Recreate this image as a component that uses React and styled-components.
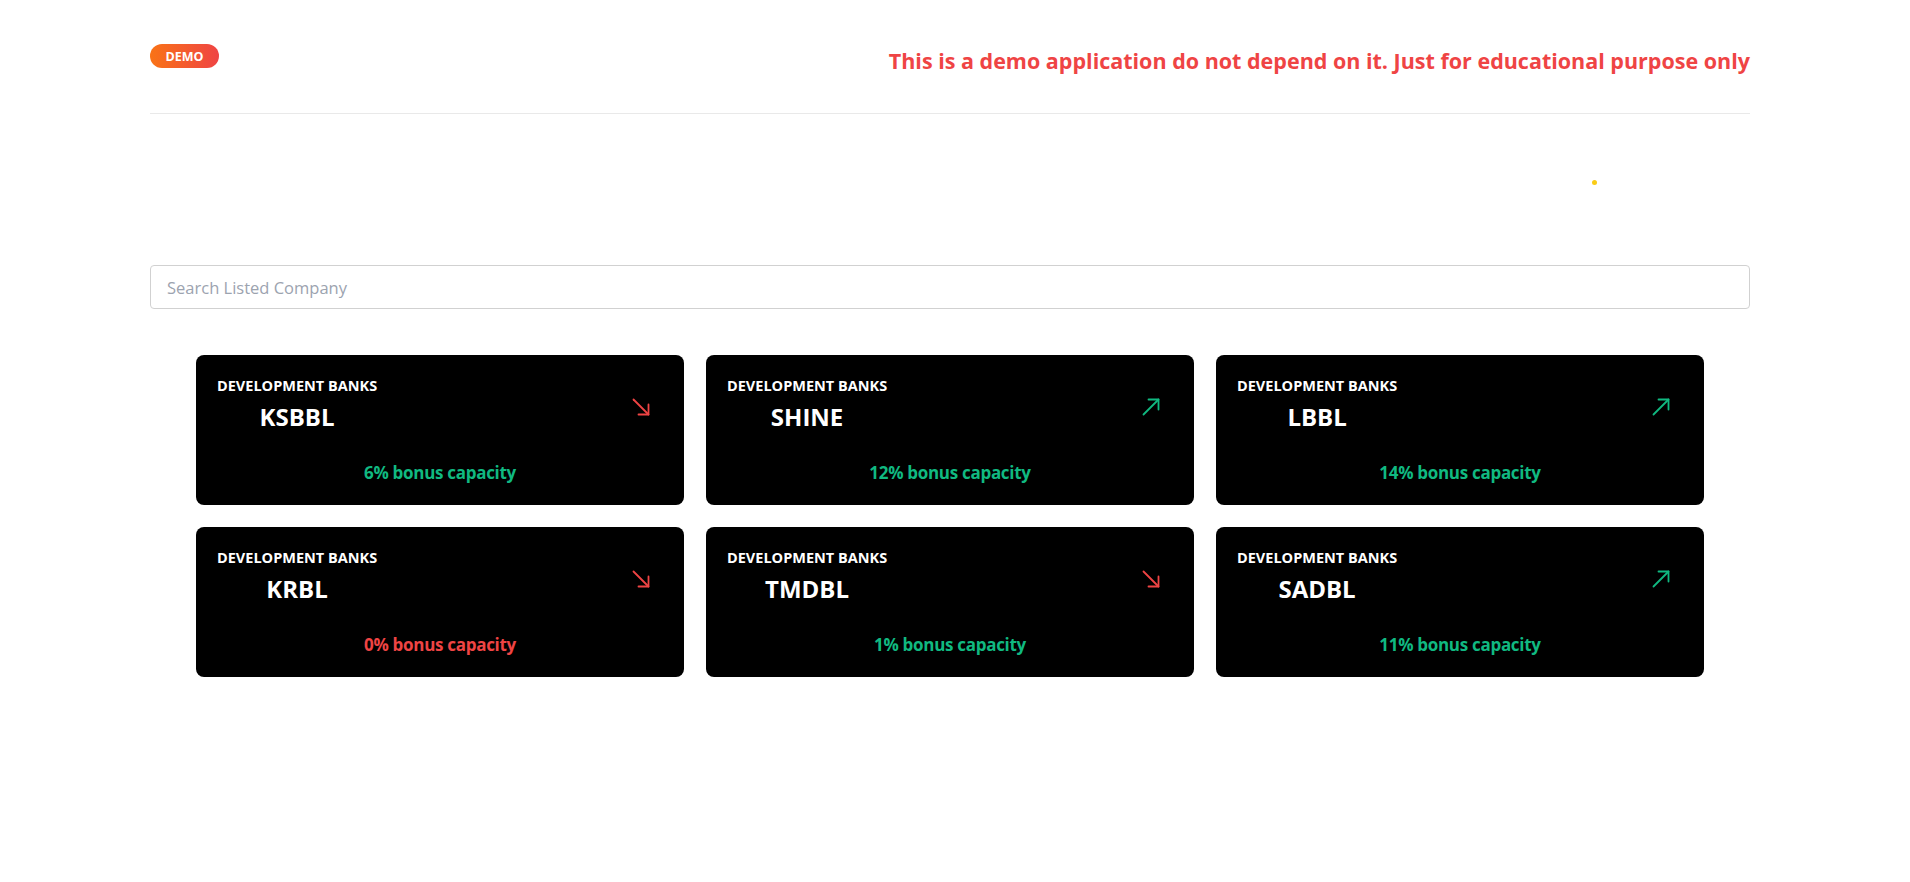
import React from "react";
import styled, { createGlobalStyle } from "styled-components";

const GlobalStyle = createGlobalStyle`
  * { box-sizing: border-box; }
  body {
    margin: 0;
    background: #ffffff;
    font-family: "Open Sans", "Noto Sans", sans-serif;
  }
`;

const Page = styled.div`
  width: 1600px;
  margin-left: 150px;
`;

const Header = styled.header`
  height: 114px;
  display: flex;
  justify-content: space-between;
  align-items: flex-start;
  padding-top: 44px;
  border-bottom: 1px solid #e9e9e9;
`;

const Badge = styled.span`
  display: inline-flex;
  align-items: center;
  justify-content: center;
  width: 69px;
  height: 24px;
  border-radius: 12px;
  background: linear-gradient(90deg, #f97316, #ef4444);
  color: #fff;
  font-size: 12.5px;
  font-weight: 700;
`;

const Notice = styled.h1`
  margin: 0;
  margin-top: 2px;
  color: #ef4444;
  font-size: 21.5px;
  font-weight: 700;
  line-height: 30px;
`;

const Hero = styled.section`
  position: relative;
  height: 151px;
`;

const Dot = styled.span`
  position: absolute;
  left: ${(p) => p.$x}px;
  top: ${(p) => p.$y}px;
  width: 5px;
  height: 5px;
  border-radius: 50%;
  background: #facc15;
`;

const Search = styled.input`
  display: block;
  width: 100%;
  height: 44px;
  border: 1px solid #d1d1d1;
  border-radius: 4px;
  padding: 0 16px;
  font-family: inherit;
  font-size: 16.5px;
  color: #333;
  outline: none;
  &::placeholder { color: #9ca3af; }
`;

const Grid = styled.div`
  display: grid;
  grid-template-columns: repeat(3, 1fr);
  gap: 22px;
  padding: 0 46px;
  margin-top: 46px;
`;

const Card = styled.div`
  height: 150px;
  background: #000;
  border-radius: 8px;
  padding: 21px 21px 0;
  display: flex;
  flex-direction: column;
`;

const Top = styled.div`
  display: flex;
  justify-content: space-between;
  align-items: flex-start;
`;

const TitleBlock = styled.div`
  display: flex;
  flex-direction: column;
  align-items: center;
`;

const Sector = styled.div`
  color: #fff;
  font-size: 14.5px;
  font-weight: 700;
  line-height: 20px;
`;

const Ticker = styled.div`
  color: #fff;
  font-size: 24px;
  font-weight: 700;
  line-height: 32px;
  margin-top: 5px;
`;

const Trend = styled.div`
  margin-top: 22px;
  margin-right: 13px;
  color: ${(p) => (p.$up ? "#10b981" : "#ef4444")};
  display: flex;
`;

const Bonus = styled.div`
  margin-top: 28px;
  text-align: center;
  color: ${(p) => (p.$positive ? "#10b981" : "#ef4444")};
  font-size: 17px;
  font-weight: 700;
  letter-spacing: -0.3px;
  line-height: 24px;
`;

const ArrowIcon = ({ up }) => (
  <svg width="18" height="18" viewBox="0 0 18 18" fill="none" stroke="currentColor" strokeWidth="1.8" strokeLinecap="round" strokeLinejoin="round">
    {up ? (
      <>
        <line x1="1.5" y1="16.5" x2="16.5" y2="1.5" />
        <polyline points="6.5,1.5 16.5,1.5 16.5,11.5" />
      </>
    ) : (
      <>
        <line x1="1.5" y1="1.5" x2="16.5" y2="16.5" />
        <polyline points="16.5,6.5 16.5,16.5 6.5,16.5" />
      </>
    )}
  </svg>
);

const companies = [
  { ticker: "KSBBL", bonus: 6, up: false },
  { ticker: "SHINE", bonus: 12, up: true },
  { ticker: "LBBL", bonus: 14, up: true },
  { ticker: "KRBL", bonus: 0, up: false },
  { ticker: "TMDBL", bonus: 1, up: false },
  { ticker: "SADBL", bonus: 11, up: true },
];

export default function App() {
  return (
    <>
      <GlobalStyle />
      <Page>
        <Header>
          <Badge>DEMO</Badge>
          <Notice>This is a demo application do not depend on it. Just for educational purpose only</Notice>
        </Header>
        <Hero>
          <Dot $x={1442} $y={66} />
        </Hero>
        <Search placeholder="Search Listed Company" />
        <Grid>
          {companies.map((c) => (
            <Card key={c.ticker}>
              <Top>
                <TitleBlock>
                  <Sector>DEVELOPMENT BANKS</Sector>
                  <Ticker>{c.ticker}</Ticker>
                </TitleBlock>
                <Trend $up={c.up}>
                  <ArrowIcon up={c.up} />
                </Trend>
              </Top>
              <Bonus $positive={c.bonus > 0}>{c.bonus}% bonus capacity</Bonus>
            </Card>
          ))}
        </Grid>
      </Page>
    </>
  );
}
